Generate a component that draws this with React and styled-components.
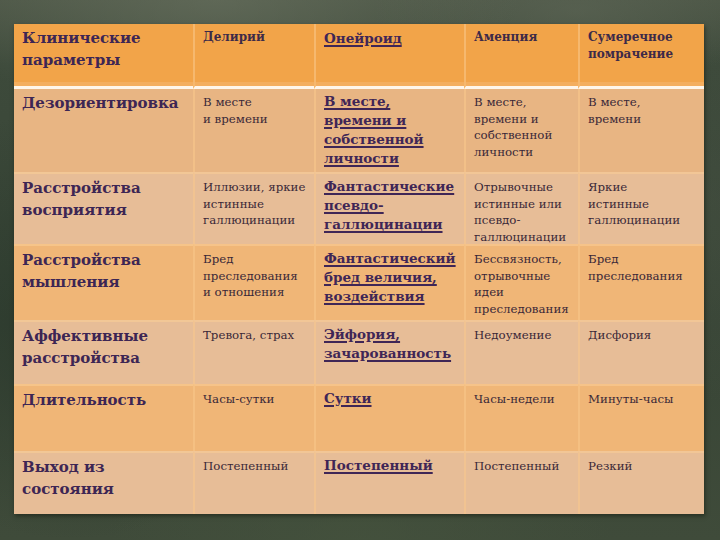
import styled, { createGlobalStyle } from "styled-components";

const GlobalStyle = createGlobalStyle`
  html, body {
    margin: 0;
    padding: 0;
    background: #3d4a3a;
  }
  * {
    box-sizing: border-box;
  }
`;

const columns = ["179px", "121px", "150px", "114px", "126px"];

// line breaks follow the slide
const header = [
  "Клинические\nпараметры",
  "Делирий",
  "Онейроид",
  "Аменция",
  "Сумеречное\nпомрачение",
];

const rows = [
  {
    height: 83,
    tone: "warm",
    cells: [
      "Дезориентировка",
      "В месте\nи времени",
      "В месте,\nвремени и\nсобственной\nличности",
      "В месте,\nвремени и\nсобственной\nличности",
      "В месте,\nвремени",
    ],
  },
  {
    height: 72,
    tone: "pale",
    cells: [
      "Расстройства\nвосприятия",
      "Иллюзии, яркие\nистинные\nгаллюцинации",
      "Фантастические\nпсевдо-\nгаллюцинации",
      "Отрывочные\nистинные или\nпсевдо-\nгаллюцинации",
      "Яркие\nистинные\nгаллюцинации",
    ],
  },
  {
    height: 76,
    tone: "orange",
    cells: [
      "Расстройства\nмышления",
      "Бред\nпреследования\nи отношения",
      "Фантастический\nбред величия,\nвоздействия",
      "Бессвязность,\nотрывочные\nидеи\nпреследования",
      "Бред\nпреследования",
    ],
  },
  {
    height: 64,
    tone: "pale",
    cells: [
      "Аффективные\nрасстройства",
      "Тревога, страх",
      "Эйфория,\nзачарованность",
      "Недоумение",
      "Дисфория",
    ],
  },
  {
    height: 67,
    tone: "orange",
    cells: ["Длительность", "Часы-сутки", "Сутки", "Часы-недели", "Минуты-часы"],
  },
  {
    height: 63,
    tone: "pale",
    cells: [
      "Выход из\nсостояния",
      "Постепенный",
      "Постепенный",
      "Постепенный",
      "Резкий",
    ],
  },
];

const tones = {
  header: "#f2a449",
  warm: "#e8b583",
  orange: "#f0b677",
  pale: "#e7bd97",
};

const Slide = styled.div`
  width: 720px;
  height: 540px;
  padding: 24px 16px 26px 14px;
  background:
    radial-gradient(ellipse 60% 30% at 30% 0%, rgba(110, 118, 100, 0.55), transparent 70%),
    radial-gradient(ellipse 40% 20% at 80% 2%, rgba(100, 108, 92, 0.45), transparent 70%),
    radial-gradient(ellipse 50% 30% at 50% 100%, rgba(70, 84, 62, 0.6), transparent 70%),
    radial-gradient(circle at 10% 60%, rgba(30, 45, 35, 0.5), transparent 30%),
    radial-gradient(circle at 95% 40%, rgba(70, 80, 66, 0.5), transparent 25%),
    linear-gradient(180deg, #4c5646 0%, #3d4a3b 12%, #384536 60%, #3f4b3a 100%);
  font-family: "DejaVu Serif", "Liberation Serif", serif;
`;

const Table = styled.div`
  width: 690px;
  display: grid;
  grid-template-columns: ${columns.join(" ")};
  box-shadow: 1px 2px 4px rgba(20, 25, 15, 0.55);
`;

const Cell = styled.div`
  height: ${({ $height }) => $height}px;
  background: ${({ $tone }) => tones[$tone]};
  padding: ${({ $head }) => ($head ? "3px 6px 0 8px" : "3px 4px 0 8px")};
  border-left: ${({ $first }) =>
    $first ? "none" : "2px solid rgba(250, 200, 140, 0.55)"};
  border-top: ${({ $head, $afterHead }) =>
    $head || $afterHead ? "none" : "2px solid rgba(250, 205, 150, 0.6)"};
  border-bottom: ${({ $head }) => ($head ? "3px solid #fff6ea" : "none")};
  box-shadow: ${({ $head }) => ($head ? "inset 0 -4px 0 #f4ae5e" : "none")};
  white-space: pre;
  overflow: hidden;
`;

const ParamText = styled.div`
  font-weight: 700;
  font-size: 15px;
  line-height: 22px;
  color: #3d2654;
`;

const AccentText = styled.div`
  font-weight: 700;
  font-size: 13.5px;
  line-height: 19px;
  color: #3f2656;
  text-decoration: underline;
  text-decoration-thickness: 1.5px;
  text-underline-offset: 2px;
  padding-top: ${({ $head }) => ($head ? "2px" : "0")};
`;

const PlainText = styled.div`
  font-size: ${({ $head }) => ($head ? 12 : 11.8)}px;
  line-height: ${({ $head }) => ($head ? 17 : 16.5)}px;
  color: ${({ $head }) => ($head ? "#3d2a48" : "#3a2838")};
  font-weight: ${({ $head }) => ($head ? 700 : 400)};
  padding-top: 2px;
`;

function CellText({ col, text, head }) {
  if (col === 0) return <ParamText>{text}</ParamText>;
  if (col === 2) return <AccentText $head={head}>{text}</AccentText>;
  return <PlainText $head={head}>{text}</PlainText>;
}

export default function App() {
  return (
    <>
      <GlobalStyle />
      <Slide>
        <Table>
          {header.map((h, i) => (
            <Cell key={"h" + i} $height={65} $tone="header" $head $first={i === 0}>
              <CellText col={i} text={h} head />
            </Cell>
          ))}
          {rows.map((row, r) =>
            row.cells.map((c, i) => (
              <Cell
                key={r + "-" + i}
                $height={row.height}
                $tone={row.tone}
                $first={i === 0}
                $afterHead={r === 0}
              >
                <CellText col={i} text={c} />
              </Cell>
            ))
          )}
        </Table>
      </Slide>
    </>
  );
}
